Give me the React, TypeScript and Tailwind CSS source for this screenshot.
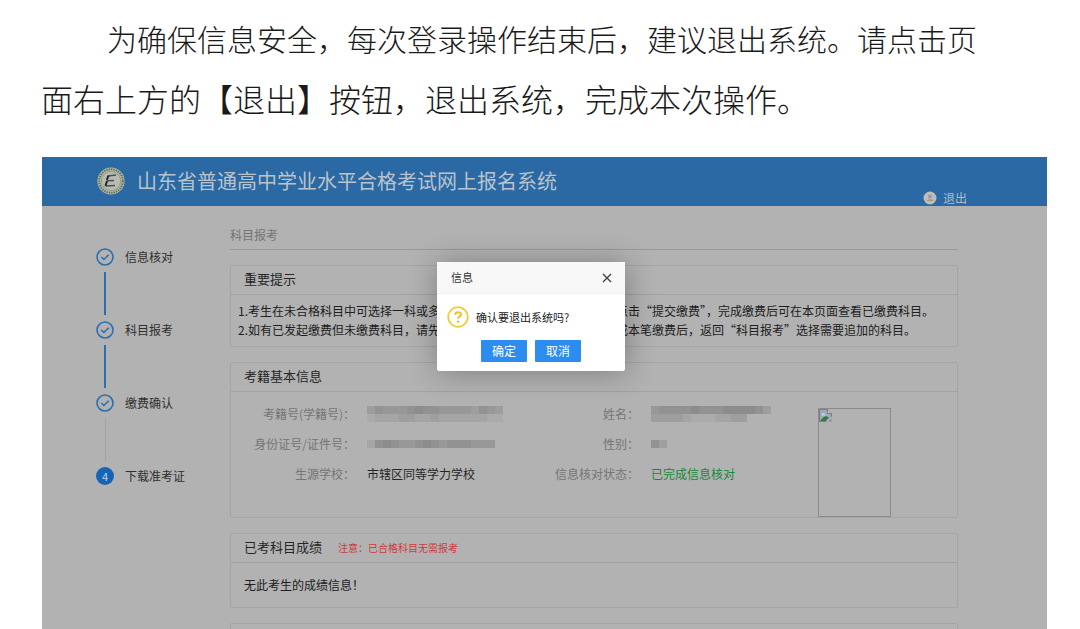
import { ReactNode, useState } from "react";
import clsx from "clsx";

const steps = [
  { label: "信息核对", state: "done" },
  { label: "科目报考", state: "done" },
  { label: "缴费确认", state: "done" },
  { label: "下载准考证", state: "current" },
];

const Emblem = () => (
  <svg viewBox="0 0 28 28" className="size-7 shrink-0" aria-hidden="true">
    <circle cx="14" cy="14" r="13.6" fill="#b4b8a2" />
    <circle
      cx="14"
      cy="14"
      r="11.8"
      fill="none"
      stroke="#5c7264"
      strokeWidth="2"
      strokeDasharray="1.4 1"
    />
    <circle cx="14" cy="14" r="9.6" fill="#b9bbb3" stroke="#8d967c" strokeWidth="0.8" />
    <path d="M11 9l8-1M10 13.800l7-.4M9 19l9-.5" stroke="#4b514b" strokeWidth="1.500" />
    <path d="M11.500 8.500l-1.700 4.500M10 14l-1.500 5" stroke="#20252a" strokeWidth="2" />
  </svg>
);

const CheckCircle = () => (
  <svg viewBox="0 0 18 18" className="size-[18px]" fill="none" aria-hidden="true">
    <circle cx="9" cy="9" r="8" stroke="#2d6eb1" strokeWidth="1.600" />
    <path d="M5.300 9l2.600 2.500 4.800-4.700" stroke="#2d6eb1" strokeWidth="1.600" />
  </svg>
);

const QuestionIcon = () => (
  <svg viewBox="0 0 22 22" className="size-[22px] shrink-0" fill="none" aria-hidden="true">
    <circle cx="11" cy="11" r="9.800" stroke="#f0cb3f" strokeWidth="1.700" />
    <path
      d="M8.200 8.800c0-3.600 5.800-3.400 5.800-.3 0 2.100-2.900 2-2.900 4.300"
      stroke="#edbf2c"
      strokeWidth="2"
    />
    <circle cx="11.100" cy="15.700" r="1.200" fill="#edbf2c" />
  </svg>
);

const BrokenImage = () => (
  <svg viewBox="0 0 13 13" className="size-[13px]" aria-hidden="true">
    <path d="M.5.5h8l4 4v8h-12z" fill="#98a9c0" stroke="#7d7d7d" />
    <path d="M8.500.5v4h4" fill="#c4c4c4" stroke="#7d7d7d" />
    <path d="M2.500 5.500c0-2 3-2 3-.5 1.500 0 1.500 1.500 0 1.500h-2c-.6 0-1-.4-1-1z" fill="#ccd2da" />
    <path d="M1 12l3-3.500 3-1.500 3 1.500L6.500 12z" fill="#37793a" />
    <path d="M7 13l6-5.500V13z" fill="#b2b2b2" />
    <path d="M9.500 12.500h3V9.500z" fill="#7d8a9a" />
  </svg>
);

// masked personal data, each number is the darkness of one tile
const Mosaic = ({ rows, label }: { rows: string[]; label: string }) => (
  <svg
    viewBox={`0 0 ${rows[0].length * 8} ${rows.length * 8}`}
    width={rows[0].length * 8}
    height={rows.length * 8}
    role="img"
    aria-label={label}
  >
    {rows.map((row, y) =>
      row.split("").map((tone, x) => (
        <rect
          key={`${x}-${y}`}
          x={x * 8}
          y={y * 8}
          width="8"
          height="8"
          fill="#4c4c52"
          fillOpacity={Number(tone) / 16}
          shapeRendering="crispEdges"
        />
      ))
    )}
  </svg>
);

const Card = ({
  title,
  note,
  children,
}: {
  title?: string;
  note?: string;
  children?: ReactNode;
}) => (
  <section className="mb-[15px] border border-[#a5a5a5] rounded-xs">
    <div className="flex items-center gap-4 h-[29px] px-[13px] border-b border-[#a2a2a2]">
      {title && <h2 className="text-[13px] leading-[26px] pb-0.5 text-[#262626]">{title}</h2>}
      {note && <span className="text-[10px] text-[#cd3a40]">{note}</span>}
    </div>
    {children}
  </section>
);

const Field = ({ label, children }: { label: string; children: ReactNode }) => (
  <>
    <dt className="text-right text-[#757575]">{label}</dt>
    <dd className="flex items-center h-[30px] text-[#262626]">{children}</dd>
  </>
);

const Sidebar = () => (
  <ol className="w-[188px] shrink-0 pl-[54px] pt-[42px] text-xs text-[#303030]">
    {steps.map((step, i) => (
      <li key={step.label}>
        <div className="flex items-center gap-[11px] h-[18px]">
          {step.state === "done" ? (
            <CheckCircle />
          ) : (
            <span className="flex items-center justify-center size-[18px] rounded-full bg-[#1565b5] text-[11px] text-[#c8d4e0]">
              {i + 1}
            </span>
          )}
          {step.label}
        </div>
        {i < steps.length - 1 && (
          <div className="flex justify-center w-[18px] h-[55px] py-1.5">
            <div
              className={clsx(
                steps[i + 1].state === "done" ? "w-0.5 bg-[#2d6eb1]" : "w-px bg-[#a2a2a2]"
              )}
            />
          </div>
        )}
      </li>
    ))}
  </ol>
);

const ConfirmDialog = ({ onClose }: { onClose: () => void }) => (
  <div className="absolute inset-x-0 top-[105px] flex justify-center pr-[27px]">
    <div
      role="dialog"
      aria-labelledby="dialog-title"
      className="w-[188px] h-[109px] bg-white rounded-xs shadow-[1px_1px_30px_rgba(0,0,0,0.3)]"
    >
      <div className="flex items-center justify-between h-8 pl-3.5 pr-[13px] bg-[#f8f8f8] border-b border-[#f0f0f0]">
        <h2 id="dialog-title" className="text-[11px] text-[#333]">
          信息
        </h2>
        <button onClick={onClose} aria-label="关闭">
          <svg viewBox="0 0 10 10" className="size-2.5" aria-hidden="true">
            <path d="M1 1l8 8M9 1L1 9" stroke="#444" strokeWidth="1.400" />
          </svg>
        </button>
      </div>
      <div className="flex items-center gap-[7px] h-[46px] pl-2.5 text-[11px] text-[#222]">
        <QuestionIcon />
        确认要退出系统吗?
      </div>
      <div className="flex justify-center gap-2">
        <button
          onClick={onClose}
          className="w-[46px] h-[22px] text-xs text-white bg-[#2d8cf0] rounded-[1px]"
        >
          确定
        </button>
        <button
          onClick={onClose}
          className="w-[46px] h-[22px] text-xs text-white bg-[#2d8cf0] rounded-[1px]"
        >
          取消
        </button>
      </div>
    </div>
  </div>
);

const App = () => {
  const [open, setOpen] = useState(true);

  return (
    <div
      lang="zh-CN"
      className="flex flex-col h-screen overflow-hidden bg-white font-['Noto_Sans_CJK_SC',sans-serif]"
    >
      {/* Texto de la guía */}
      <p className="h-[157px] shrink-0 pl-[41px] pt-2 leading-[60px] font-light whitespace-nowrap text-[#1a1a1a]">
        <span className="block pl-[66px] text-[30px]">
          为确保信息安全，每次登录操作结束后，建议退出系统。请点击页
        </span>
        <span className="block text-[32px]">
          面右上方的【退出】按钮，退出系统，完成本次操作。
        </span>
      </p>

      <div className="relative flex flex-col grow ml-[42px] mr-[33px] bg-[#b2b2b2] overflow-hidden">
        <header className="flex justify-between h-[49px] shrink-0 pl-[55px] pr-20 bg-[#2a69a3]">
          <div className="flex items-center gap-3 pb-0.5 text-xl text-[#b9c3cd]">
            <Emblem />
            <h1>山东省普通高中学业水平合格考试网上报名系统</h1>
          </div>
          <button
            onClick={() => setOpen(true)}
            className="flex items-center self-end gap-1.5 text-xs text-[#b0bcc8]"
          >
            <svg viewBox="0 0 14 14" className="size-3.5" aria-hidden="true">
              <circle cx="7" cy="7" r="6.500" fill="#bdbdb9" />
              <path d="M3.500 10c.5-2.500 6.500-2.500 7 0z" fill="#a09a90" />
              <circle cx="7" cy="5.500" r="2" fill="#989c9e" />
            </svg>
            退出
          </button>
        </header>

        <div className="flex grow">
          <Sidebar />
          <main className="grow min-w-0 mr-[89px] pt-5 text-xs">
            <p className="h-[24px] mb-[15px] leading-[18px] text-[#757575] border-b border-[#999]">
              科目报考
            </p>

            <Card title="重要提示">
              <div className="pl-[7px] pt-1.5 pb-[7px] leading-[19px] whitespace-nowrap text-[#202020]">
                <p>
                  1.考生在未合格科目中可选择一科或多科报考(可多选)，选择科目完成后点击“提交缴费”，完成缴费后可在本页面查看已缴费科目。
                </p>
                <p>
                  2.如有已发起缴费但未缴费科目，请先完成缴费(或取消)，支付订单并完成本笔缴费后，返回“科目报考”选择需要追加的科目。
                </p>
              </div>
            </Card>

            <Card title="考籍基本信息">
              <div className="flex">
                <dl className="grid grow content-start grid-cols-[124px_1fr_84px_167px] gap-x-3 pt-[7px] leading-[30px] whitespace-nowrap">
                  <Field label="考籍号(学籍号)：">
                    <Mosaic
                      label="考籍号"
                      rows={["35444565544443543", "12223322322222211"]}
                    />
                  </Field>
                  <Field label="姓名：">
                    <Mosaic label="姓名" rows={["455556555666653", "333321112233000"]} />
                  </Field>
                  <Field label="身份证号/证件号：">
                    <Mosaic label="证件号" rows={["2565445654555444"]} />
                  </Field>
                  <Field label="性别：">
                    <Mosaic label="性别" rows={["53"]} />
                  </Field>
                  <Field label="生源学校：">市辖区同等学力学校</Field>
                  <Field label="信息核对状态：">
                    <span className="text-[#16883a]">已完成信息核对</span>
                  </Field>
                </dl>
                <div className="w-[73px] h-[109px] mt-4 mr-[66px] border border-[#8b8b8b]">
                  <BrokenImage />
                </div>
              </div>
            </Card>

            <Card title="已考科目成绩" note="注意：已合格科目无需报考">
              <p className="px-[13px] pt-3 pb-[13px] leading-[19px] text-[#202020]">
                无此考生的成绩信息！
              </p>
            </Card>

            <Card />
          </main>
        </div>

        {open && <ConfirmDialog onClose={() => setOpen(false)} />}
      </div>
    </div>
  );
};

export default App;
